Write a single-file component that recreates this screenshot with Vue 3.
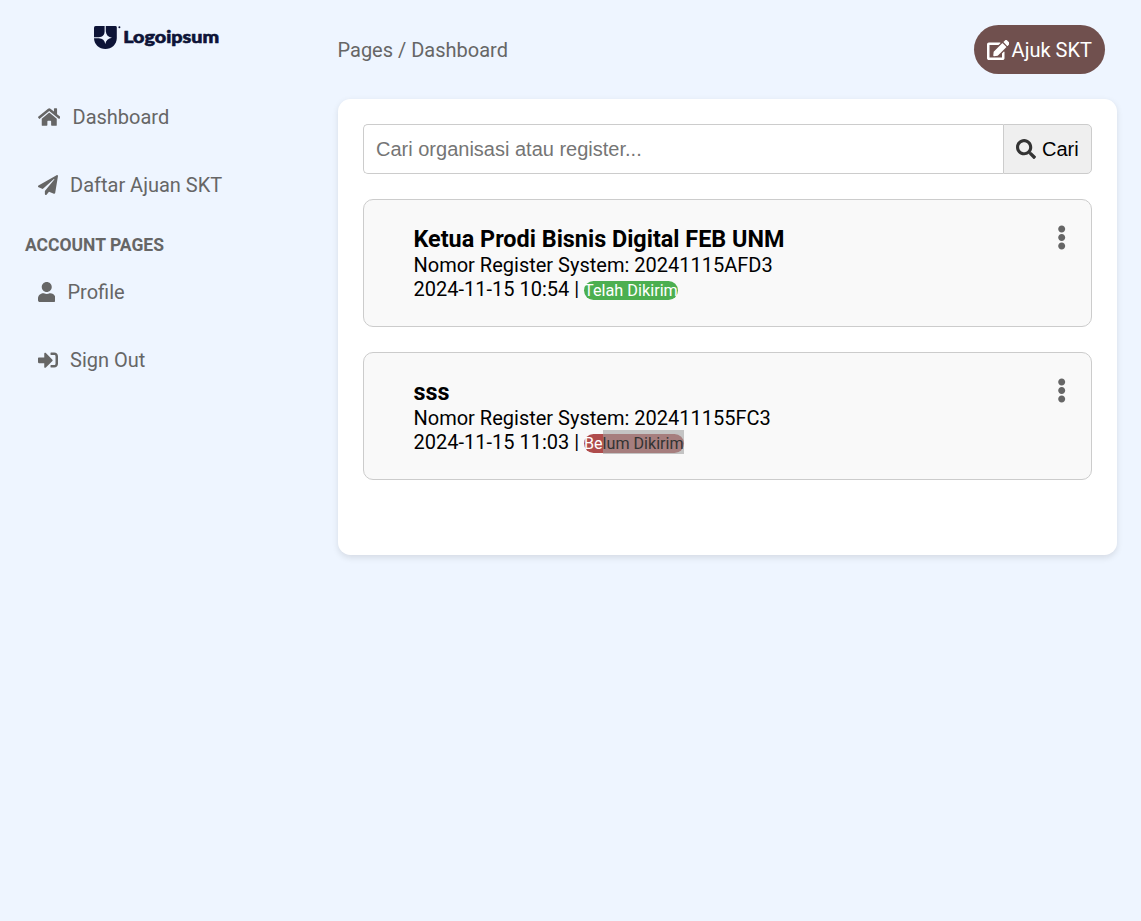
<script setup>
const icons = {
  home: { w: 576, d: 'M280.37 148.26L96 300.11V464a16 16 0 0 0 16 16l112.06-.29a16 16 0 0 0 15.92-16V368a16 16 0 0 1 16-16h64a16 16 0 0 1 16 16v95.64a16 16 0 0 0 16 16.05L464 480a16 16 0 0 0 16-16V300L295.67 148.26a12.19 12.19 0 0 0-15.3 0zM571.6 251.47L488 182.56V44.05a12 12 0 0 0-12-12h-56a12 12 0 0 0-12 12v72.61L318.47 43a48 48 0 0 0-61 0L4.34 251.47a12 12 0 0 0-1.6 16.9l25.5 31A12 12 0 0 0 45.15 301l235.22-193.74a12.19 12.19 0 0 1 15.3 0L530.9 301a12 12 0 0 0 16.9-1.6l25.5-31a12 12 0 0 0-1.7-16.93z' },
  plane: { w: 512, d: 'M476 3.2L12.5 270.6c-18.1 10.4-15.8 35.6 2.2 43.2L121 358.4l287.3-253.2c5.5-4.9 13.3 2.6 8.6 8.3L176 407v80.5c0 23.6 28.5 32.9 42.5 15.8L282 426l124.6 52.2c14.2 6 30.4-2.9 33-18.2l72-432C515 7.8 493.3-6.8 476 3.2z' },
  user: { w: 448, d: 'M224 256c70.7 0 128-57.3 128-128S294.7 0 224 0 96 57.3 96 128s57.3 128 128 128zm89.6 32h-16.7c-22.2 10.2-46.9 16-72.9 16s-50.6-5.8-72.9-16h-16.7C60.2 288 0 348.2 0 422.4V464c0 26.5 21.5 48 48 48h352c26.5 0 48-21.5 48-48v-41.6c0-74.2-60.2-134.4-134.4-134.4z' },
  sign: { w: 512, d: 'M416 448h-84c-6.6 0-12-5.4-12-12v-40c0-6.6 5.4-12 12-12h84c17.7 0 32-14.3 32-32V160c0-17.7-14.3-32-32-32h-84c-6.6 0-12-5.4-12-12V76c0-6.6 5.4-12 12-12h84c53 0 96 43 96 96v192c0 53-43 96-96 96zm-47-201L201 79c-15-15-41-4.5-41 17v96H24c-13.3 0-24 10.7-24 24v96c0 13.3 10.7 24 24 24h136v96c0 21.5 26 32 41 17l168-168c9.3-9.4 9.3-24.6 0-34z' },
}
const mainNav = [
  { label: 'Dashboard', icon: icons.home },
  { label: 'Daftar Ajuan SKT', icon: icons.plane },
]
const accountNav = [
  { label: 'Profile', icon: icons.user },
  { label: 'Sign Out', icon: icons.sign },
]
const items = [
  { title: 'Ketua Prodi Bisnis Digital FEB UNM', reg: '20241115AFD3', date: '2024-11-15 10:54', sent: true },
  { title: 'sss', reg: '202411155FC3', date: '2024-11-15 11:03', sent: false },
]
</script>

<template>
  <div class="page">
    <aside class="sidebar">
      <svg class="logo" width="128" height="26" viewBox="0 0 128 26">
        <g fill="#0d1437">
          <path d="M2.6 1H22.4Q23.8 1 23.8 2.4V13C23.8 19.5 18.6 24 12.4 24S1 19.5 1 13V2.6Q1 1 2.6 1Z" />
          <circle cx="26.4" cy="2.2" r="1" />
        </g>
        <path class="logo-cut" d="M11.6 .8H12.8V6.2C13.2 10 15.2 12.2 19 12.7C15.2 13.2 13 15.3 12.3 19C11.6 15.3 9.6 13.5 5.8 13.2H.7V12.2H5.8C9.6 11.8 11.6 10 11.6 6.2Z" />
        <text class="logo-text" x="30.2" y="18.2" textLength="96" lengthAdjust="spacingAndGlyphs">Logoipsum</text>
      </svg>
      <nav class="nav">
        <a v-for="n in mainNav" :key="n.label" class="nav-item">
          <svg class="icon" :viewBox="`0 0 ${n.icon.w} 512`"><path :d="n.icon.d" /></svg>
          <span>{{ n.label }}</span>
        </a>
      </nav>
      <h2 class="nav-heading">ACCOUNT PAGES</h2>
      <nav class="nav">
        <a v-for="n in accountNav" :key="n.label" class="nav-item">
          <svg class="icon" :viewBox="`0 0 ${n.icon.w} 512`"><path :d="n.icon.d" /></svg>
          <span>{{ n.label }}</span>
        </a>
      </nav>
    </aside>
    <main class="main">
      <header class="topbar">
        <span class="crumbs">Pages / Dashboard</span>
        <button class="submit">
          <svg class="icon" viewBox="0 0 576 512"><path d="M402.6 83.2l90.2 90.2c3.8 3.8 3.8 10 0 13.8L274.4 405.6l-92.8 10.3c-12.4 1.4-22.9-9.1-21.5-21.5l10.3-92.8L388.8 83.2c3.8-3.8 10-3.8 13.8 0zm162-22.9l-48.8-48.8c-15.2-15.2-39.9-15.2-55.2 0l-35.4 35.4c-3.8 3.8-3.8 10 0 13.8l90.2 90.2c3.8 3.8 10 3.8 13.8 0l35.4-35.4c15.2-15.3 15.2-40 0-55.2zM384 346.2V448H64V128h229.8c3.2 0 6.2-1.3 8.5-3.5l40-40c7.6-7.6 2.2-20.5-8.5-20.5H48C21.5 64 0 85.5 0 112v352c0 26.5 21.5 48 48 48h352c26.5 0 48-21.5 48-48V306.2c0-10.7-12.9-16-20.5-8.5l-40 40c-2.2 2.3-3.5 5.3-3.5 8.5z" /></svg>
          <span>Ajuk SKT</span>
        </button>
      </header>
      <section class="panel">
        <div class="search">
          <input class="search-input" type="text" placeholder="Cari organisasi atau register..." />
          <button class="search-btn">
            <svg class="icon" viewBox="0 0 512 512"><path d="M505 442.7L405.3 343c-4.5-4.5-10.6-7-17-7H372c27.6-35.3 44-79.7 44-128C416 93.1 322.9 0 208 0S0 93.1 0 208s93.1 208 208 208c48.3 0 92.7-16.4 128-44v16.3c0 6.4 2.5 12.5 7 17l99.7 99.7c9.4 9.4 24.6 9.4 33.9 0l28.3-28.3c9.4-9.4 9.4-24.6.1-34zM208 336c-70.7 0-128-57.2-128-128 0-70.7 57.2-128 128-128 70.7 0 128 57.2 128 128 0 70.7-57.2 128-128 128z" /></svg>
            <span>Cari</span>
          </button>
        </div>
        <article v-for="it in items" :key="it.reg" class="card">
          <div>
            <h3 class="title">{{ it.title }}</h3>
            <p class="line">Nomor Register System: {{ it.reg }}</p>
            <p class="line">{{ it.date }} | <span v-if="it.sent" class="badge sent">Telah Dikirim</span><span v-else class="badge unsent">Be<span class="selected">lum Dikirim</span></span></p>
          </div>
          <svg class="more" viewBox="0 0 192 512"><path d="M96 184c39.8 0 72 32.2 72 72s-32.2 72-72 72-72-32.2-72-72 32.2-72 72-72zM24 80c0 39.8 32.2 72 72 72s72-32.2 72-72S135.8 8 96 8 24 40.2 24 80zm0 352c0 39.8 32.2 72 72 72s72-32.2 72-72-32.2-72-72-72-72 32.2-72 72z" /></svg>
        </article>
      </section>
    </main>
  </div>
</template>

<style>
body { background: #eef5ff; }
</style>

<style scoped>
* { box-sizing: border-box; }
.page {
  display: flex;
  min-height: 921px;
  font: 20px/24px Roboto, sans-serif;
  color: #000;
}
.sidebar { width: 312.5px; padding: 25px; color: #666; }
.logo { display: block; margin: 0 auto 42px 68px; }
.logo-cut { fill: #eef5ff; }
.logo-text { font: 900 17.8px Lato, sans-serif; fill: #0d1437; stroke: #0d1437; stroke-width: 0.6px; stroke-linejoin: round; }
.nav { display: flex; flex-direction: column; gap: 20px; }
.nav-item { display: flex; align-items: center; gap: 12.5px; height: 48px; padding-left: 12.5px; }
.icon { height: 20px; fill: currentColor; flex: none; }
.nav .icon { position: relative; top: -0.5px; }
.nav-heading { margin: 24px 0 11px; font-size: 17.5px; line-height: 24px; font-weight: 700; }
.main { flex: 1; padding: 25px 24px 25px 25px; }
.topbar { display: flex; justify-content: space-between; align-items: center; height: 49px; padding-right: 12px; }
.crumbs { color: #666; }
.submit {
  display: flex; align-items: center; gap: 2.5px;
  width: 131px; height: 49px; padding: 0 12px 0 12.6px;
  border: 0; border-radius: 25px;
  background: #70504e; color: #fff;
  font: 20px/24px Roboto, sans-serif;
}
.panel {
  height: 456px; margin-top: 25px; padding: 25px;
  background: #fff; border-radius: 12.5px;
  box-shadow: 0 2.5px 6px rgba(0, 0, 0, 0.1);
}
.search { display: flex; height: 50px; }
.search-input {
  flex: 1; min-width: 0; padding: 0 12.5px;
  border: 1px solid #ccc; border-right: 0; border-radius: 5px 0 0 5px;
  font: 20px "Liberation Sans", sans-serif; background: #fff;
}
.search-input::placeholder { color: #757575; }
.search-btn {
  display: flex; align-items: center; gap: 6px;
  width: 89px; padding: 0 12px;
  border: 1px solid #ccc; border-radius: 0 5px 5px 0;
  background: #efefef; color: #000;
  font: 20px "Liberation Sans", sans-serif;
}
.search-btn .icon { fill: #333; }
.card {
  display: flex; justify-content: space-between;
  height: 128px; margin-top: 25px; padding: 25px 25px 0 50px;
  border: 1px solid #ccc; border-radius: 10px;
  background: #f9f9f9;
}
.title { margin: 0; font-size: 23.4px; line-height: 28px; font-weight: 700; }
.line { margin: 0; }
.badge { border-radius: 12.5px; font-size: 16.25px; color: #fff; }
.sent { background: #4caf50; }
.unsent { background: #af4c4c; font-size: 16.1px; }
.selected { display: inline-block; height: 24px; line-height: 27px; margin: -5px 0; background: rgba(160, 160, 160, 0.6); color: #333; }
.more { width: 9.4px; height: 25px; fill: #666; flex: none; }
</style>
